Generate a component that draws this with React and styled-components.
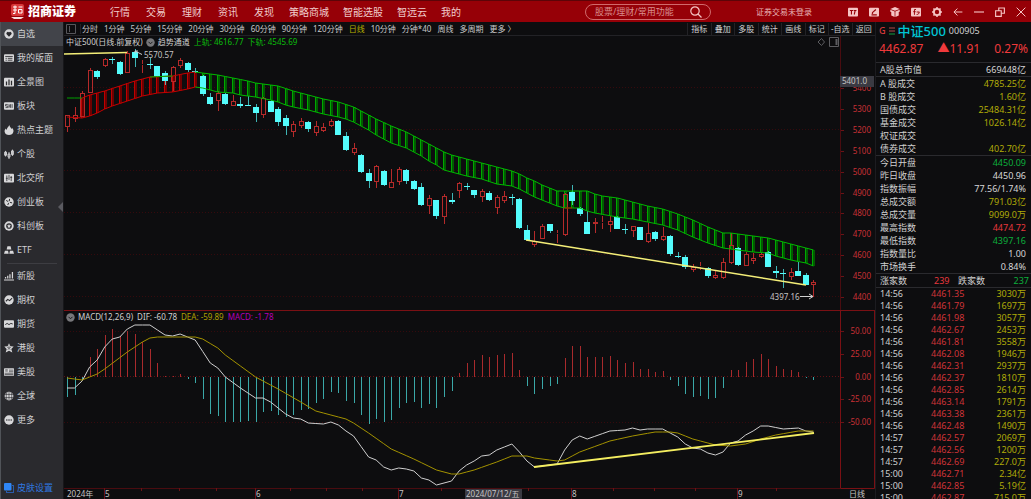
import React, { useState } from "react";
import styled, { createGlobalStyle, css } from "styled-components";

const STEP = 7.54;
const X0 = 67;
const xAt = (i) => X0 + i * STEP;

const UP = "#b52a2a";
const DOWN = "#54fcfc";

// r = rising, c = falling; high, body top, body bottom, low
const candles = `r115,115,127,132 r107,115,119,122 r91,93,117,117 r68,70,93,93 c70,71,77,79
r58,59,66,67 c57,59,60,64 c61,62,74,75 r51,53,73,73 c49,52,58,67
r60,64,65,73 c58,64,65,69 c66,66,77,77 c71,73,81,85 r66,67,82,91
r58,60,66,68 c62,63,70,72 c68,71,72,73 c75,76,94,96 c93,97,104,105
r91,93,101,111 c93,94,104,105 r95,101,106,106 c97,104,106,108 c96,105,106,106
c104,107,113,122 r97,98,115,118 c100,101,112,112 c107,109,122,126 c115,118,126,135
r121,124,132,137 r118,121,126,128 c121,122,129,132 r121,126,133,136 r123,127,131,132
r119,121,126,127 c120,121,135,135 c132,136,150,151 r143,148,153,155 c154,155,172,173
c169,173,181,188 r165,166,182,188 c170,171,185,186 r169,182,188,188 r167,169,182,185
c169,170,181,184 c180,181,189,190 c183,187,205,206 r195,198,206,214 c200,200,216,219
r194,196,217,224 c193,200,202,204 r182,183,191,198 c183,186,187,190 c190,190,195,198
r189,191,197,202 c191,193,200,201 r195,197,208,214 r191,196,201,203 c194,197,198,205
c198,199,228,229 c225,230,240,241 r231,241,245,247 r224,226,239,239 c224,224,231,233
r230,233,234,243 r193,194,235,236 c185,192,201,205 c207,208,214,216 c211,222,234,234
r218,222,224,233 r216,222,223,229 r216,221,225,232 c216,217,229,229 c224,229,230,234
r226,226,231,237 c227,227,240,240 r223,233,242,243 c231,232,239,241 r227,236,240,241
c235,236,254,256 c252,256,257,258 c255,257,267,269 r264,267,270,272 r262,266,267,270
c267,268,276,278 r271,275,278,279 r258,262,278,279 r233,245,263,264 c247,248,265,266
r252,254,266,266 r253,258,261,264 r252,254,257,258 c251,252,267,267 c266,271,273,278
c269,273,274,288 r268,272,277,280 c262,271,276,276 c273,275,285,285 r280,282,285,297`
  .split(/\s+/)
  .map((s) => [s[0], ...s.slice(1).split(",").map(Number)]);

const macdBars = [
  -20, -18, -3, 20, 28, 42, 48, 41, 46, 43, 35, 28, 14, 1, 1, 3, -2, -6, -22,
  -37, -39, -45, -45, -45, -44, -45, -35, -34, -38, -40, -38, -33, -32, -26,
  -22, -15, -16, -24, -26, -38, -47, -42, -45, -43, -31, -26, -25, -31, -27,
  -31, -20, -14, 4, 14, 17, 22, 20, 22, 23, 24, 7, -9, -17, -12, -9, -7, 19,
  31, 31, 20, 20, 20, 21, 17, 14, 15, 8, 8, 5, 6, -3, -9, -17, -20, -19, -22,
  -21, -11, 7, 7, 15, 18, 23, 18, 11, 8, 7, 5, -1, -3,
];

const parse = (s) => s.split(" ").map((p) => p.split(":").map(Number));

const upperKeys = parse(
  "0:98 2:98 3:95 5:91 7:86 9:81 11:77 14:76 16:73 17:72 18:73 20:75 22:78 24:81 25:83 27:85 28:86 30:91 32:95 34:99 36:102 38:107 39:111 40:115 41:119 43:126 45:132 46:136 47:140 48:144 49:148 50:152 51:155 53:159 55:163 57:167 59:171 60:174 61:178 62:181 63:185 64:188 65:191 69:191 70:194 71:196 73:198 76:204 77:206 79:209 81:214 83:220 85:227 87:233 88:233 91:236 93:238 95:242 97:246 98:248 99:250"
);
const lowerKeys = parse(
  "0:117 2:118 3:116 4:113 5:109 6:106 8:101 10:96 12:93 14:92 16:89 17:87 18:88 20:92 22:93 23:95 25:97 27:100 28:102 29:105 30:107 32:110 34:114 36:117 37:119 38:122 39:126 40:130 41:135 43:143 45:148 47:156 48:161 49:165 50:170 51:172 53:176 55:179 57:184 59:186 60:189 61:193 62:197 63:200 64:203 65:206 66:208 68:208 69:211 70:213 73:217 75:219 77:222 79:225 81:230 83:237 85:243 87:248 89:250 91:252 93:253 94:256 96:260 98:263 99:266"
);
const difKeys = parse(
  "0:387 1:387 2:380 3:366 4:359 5:346 6:338 7:336 8:328 9:324 11:324 13:334 14:335 15:333 16:336 17:339 19:362 20:367 21:376 23:387 25:397 26:397 27:401 29:413 30:417 31:418 32:422 34:423 35:421 36:424 37:430 38:435 40:456 41:459 42:466 43:469 44:467 45:468 46:470 47:477 48:479 49:484 50:482 51:480 52:470 53:464 54:460 55:455 56:454 57:449 58:446 59:443 60:451 61:460 62:466 65:463 66:449 67:439 68:435 69:438 72:430 74:429 75:427 76:429 77:428 79:428 80:432 81:436 82:443 83:447 84:448 85:452 86:454 87:451 88:442 89:440 90:434 91:430 92:425 93:425 95:428 97:427 98:430 99:431"
);
const deaKeys = parse(
  "0:377 2:379 3:376 4:373 5:368 8:351 10:341 11:337 12:336 17:336 18:338 20:347 21:354 25:376 28:388 31:401 33:410 34:412 37:418 38:422 40:432 43:448 46:458 49:469 51:473 52:473 54:469 57:461 59:455 61:455 62:457 65:460 66:459 68:451 72:440 75:435 78:431 80:431 81:432 83:438 86:444 88:445 90:443 92:438 94:434 97:430 99:430"
);

const valueAt = (keys, i) => {
  const n = keys.findIndex(([k]) => k >= i);
  if (n <= 0) return keys[0][1];
  const [a, ya] = keys[n - 1];
  const [b, yb] = keys[n];
  return ya + ((yb - ya) * (i - a)) / (b - a);
};

const points = (keys, from = 0, to = 99) => {
  const list = [];
  for (let i = from; i <= to; i++) list.push(`${xAt(i)},${valueAt(keys, i)}`);
  return list.join(" ");
};

const menu = ["行情", "交易", "理财", "资讯", "发现"];
const menuMore = ["策略商城", "智能选股", "智远云", "我的"];
const periods = [
  "分时", "1分钟", "5分钟", "15分钟", "20分钟", "30分钟", "60分钟", "90分钟",
  "120分钟", "日线", "10分钟", "分钟*40", "周线", "多周期", "更多 〉",
];
const tools = ["指标", "叠加", "多股", "统计", "画线", "标记", "-自选", "返回"];

const sideTop = [
  ["自选", "heart"],
  ["我的版面", "panel"],
  ["全景图", "bars"],
  ["板块", "block"],
  ["热点主题", "fire"],
  ["个股", "candle"],
  ["北交所", "north"],
  ["创业板", "wheel"],
  ["科创板", "star"],
  ["ETF", "etf"],
];
const sideBottom = [
  ["新股", "rise"],
  ["期权", "option"],
  ["期货", "future"],
  ["港股", "flower"],
  ["美股", "flag"],
  ["全球", "globe"],
  ["更多", "more"],
];

const turnover = [
  ["A 股成交", "4785.25亿", "y"],
  ["B 股成交", "1.60亿", "y"],
  ["国债成交", "25484.31亿", "y"],
  ["基金成交", "1026.14亿", "y"],
  ["权证成交", "", "y"],
  ["债券成交", "402.70亿", "y"],
];
const quotes = [
  ["今日开盘", "4450.09", "g"],
  ["昨日收盘", "4450.96", "w"],
  ["指数振幅", "77.56/1.74%", "w"],
  ["总成交额", "791.03亿", "y"],
  ["总成交量", "9099.0万", "y"],
  ["最高指数", "4474.72", "r"],
  ["最低指数", "4397.16", "g"],
  ["指数量比", "1.00", "w"],
  ["市场换手", "0.84%", "w"],
];
const ticks = [
  ["14:56", "4461.35", "3030万"],
  ["14:56", "4461.79", "1697万"],
  ["14:56", "4461.98", "3057万"],
  ["14:56", "4462.67", "2453万"],
  ["14:56", "4461.81", "3558万"],
  ["14:56", "4462.08", "1946万"],
  ["14:56", "4462.31", "2937万"],
  ["14:56", "4462.37", "1810万"],
  ["14:56", "4462.85", "2614万"],
  ["14:56", "4463.14", "1791万"],
  ["14:56", "4463.38", "2361万"],
  ["14:56", "4462.48", "1490万"],
  ["14:57", "4462.57", "2069万"],
  ["14:57", "4462.56", "1200万"],
  ["14:57", "4462.69", "227.0万"],
  ["15:00", "4462.71", "2.34亿"],
  ["15:00", "4462.85", "5.19亿"],
  ["15:00", "4462.87", "715.0万"],
];

const tones = { r: "#e8383d", g: "#0caf3c", y: "#b0ab08", w: "#d6d6d6" };

const dark = "#2a2a2e";
const sideIcons = {
  heart: (
    <>
      <circle cx="8" cy="8" r="7.5" />
      <path d="M8 12.2 4.2 8.2a2.3 2.3 0 0 1 3.8-2.6 2.3 2.3 0 0 1 3.8 2.6z" fill={dark} />
    </>
  ),
  panel: (
    <>
      <rect x="0" y="2" width="16" height="12" rx="1.5" />
      <path d="M2 5.5h12M2.5 8.5h2M6 8.5h7.5M2.5 11.5h2M6 11.5h7.5" stroke={dark} strokeWidth="1.4" />
    </>
  ),
  bars: (
    <>
      <rect x="0" y="1" width="16" height="14" rx="1.5" />
      <path d="M4 13V7M8 13V4M12 13V6" stroke={dark} strokeWidth="2" />
    </>
  ),
  block: (
    <>
      <rect x="0" y="2" width="16" height="12" rx="1.5" />
      <path d="M6 5.5H2.5V8H6v2.5H2.5M8 5v6M8 8h2M10.5 5v6M13 5v6" stroke={dark} strokeWidth="1.2" fill="none" />
    </>
  ),
  fire: (
    <path d="M8.5 0c.5 3 3 4 3.2 6.2.8-.5 1-1.2 1-2 2 2 3 4 2.3 6.5C14.3 14 11.5 16 8 16s-6.500-2-7-5.300C.7 8.500 1.500 7 3 5.500c.2 1.200.6 1.800 1.300 2.200C4.500 4.500 7.500 3 8.500 0z" />
  ),
  candle: (
    <path d="M1 5h3v5H1zM2.500 3v9M6.500 8h3v5h-3zM8 5v11M12 3h3v6h-3zM13.500 1v10" fill="none" stroke="#d8d8da" strokeWidth="1.500" />
  ),
  north: (
    <>
      <rect x="0" y="1" width="16" height="14" rx="1.500" />
      <path d="M4.500 4v9M3 8.500h3M8 3v8M11.500 5v8M10 7h3" stroke={dark} strokeWidth="1.300" />
    </>
  ),
  wheel: (
    <>
      <circle cx="8" cy="8" r="7.500" />
      <path d="M8 8 3.500 5.500M8 8l1-5M8 8l5 1.500M8 8l-2 4.800" stroke={dark} strokeWidth="1.600" />
      <circle cx="8" cy="8" r="1.800" />
    </>
  ),
  star: (
    <>
      <circle cx="8" cy="8" r="7.500" />
      <circle cx="8" cy="8" r="4.500" fill={dark} />
      <path d="m8 4.800 1 2.100 2.300.3-1.700 1.600.4 2.300-2-1.100-2 1.100.4-2.300-1.700-1.600L7 6.900z" />
    </>
  ),
  etf: <path d="M5.500 2h5l1.300 5H4.200zM1.500 9h5l1 5H0zM9.500 9h5L16 14H8.500z" />,
  rise: <path d="M0 13.500h16V15H0zM1.500 9.500h2V12h-2zM5 7.500h2V12H5zM8.500 5h2v7h-2zM12.500 1.500h2V12h-2z" />,
  option: (
    <>
      <circle cx="8" cy="8" r="7.500" />
      <path d="m3 10 3-3 3 2 4-4" stroke={dark} strokeWidth="1.700" fill="none" />
    </>
  ),
  future: (
    <>
      <rect x="0" y="2" width="16" height="12" rx="1.500" />
      <path d="m2 9 3-2 3 2 3-2 3 1" stroke={dark} strokeWidth="1.500" fill="none" />
    </>
  ),
  flower: (
    <>
      <path d="m8 .5 2.200 4.700 5.300.5-3.800 3.800 1.600 5.500L8 12.300 2.700 15l1.600-5.500L.5 5.700l5.300-.5z" />
      <path d="M8 8V4M8 8l3-1M8 8l2 3M8 8l-2 3M8 8 5 7" stroke={dark} strokeWidth=".8" />
    </>
  ),
  flag: (
    <>
      <rect x="0" y="2" width="16" height="12" rx="1" />
      <path d="M2 4.500h4M2 6.500h4M8 5h7M8 7.500h7M1 10h14M1 12h14" stroke={dark} strokeWidth="1" />
    </>
  ),
  globe: (
    <>
      <circle cx="8" cy="8" r="7" />
      <path d="M8 1v14M1 5.500h14M1 10.500h14M5 1.800c-2 4-2 8.400 0 12.400M11 1.800c2 4 2 8.400 0 12.400" stroke={dark} strokeWidth="1" fill="none" />
    </>
  ),
  more: (
    <>
      <circle cx="8" cy="8" r="7.500" />
      <circle cx="4.500" cy="8" r="1.200" fill={dark} />
      <circle cx="8" cy="8" r="1.200" fill={dark} />
      <circle cx="11.500" cy="8" r="1.200" fill={dark} />
    </>
  ),
};

const cut = "#960007";
const headIcons = [
  ["模拟", <>
    <rect x="0" y="1" width="16" height="14" rx="1.500" />
    <path d="M3 5.500h5M5.500 5.500V12M9 5.500h4.500M11.500 5.500 10 12" stroke={cut} strokeWidth="1.800" />
  </>],
  ["编辑", <>
    <rect x="0" y="1" width="16" height="14" rx="1.500" />
    <path d="m5 9.500 6-5.500M4 12.500h8.500M4.500 10.500l2-.5" stroke={cut} strokeWidth="1.800" />
  </>],
  ["组件", <>
    <path d="M8 0l7.500 3L8 6 .5 3zM.5 4.500 7.400 7.300V16L2 13.500V8L.5 7.500zM15.500 4.500 8.600 7.300V16l5.400-2.500V8l1.500-.5z" />
  </>],
  ["公式", <>
    <rect x="0" y="1" width="16" height="14" rx="1.500" />
    <path d="M8 4H5.500v8.500M3.500 7.500h4M9 8h4.500M9 12c3 0 4-1.500 4-4" stroke={cut} strokeWidth="1.500" fill="none" />
  </>],
  ["设置", <>
    <circle cx="8" cy="8" r="5" fill="none" stroke="#f5c4c4" strokeWidth="3" />
    <path d="M8 0v3M8 13v3M0 8h3M13 8h3M2.300 2.300l2 2M11.700 11.700l2 2M13.700 2.300l-2 2M4.300 11.700l-2 2" stroke="#f5c4c4" strokeWidth="2.400" />
  </>],
  ["后退", <path d="M15 8H1.500M7 2.500 1.500 8 7 13.500" fill="none" stroke="#f5c4c4" strokeWidth="1.600" />],
  ["最小化", <path d="M0 8h16" stroke="#f5c4c4" strokeWidth="1.800" />],
  ["还原", <path d="M1 6h9v9H1zM6 6V1.500h9V10h-5" fill="none" stroke="#f5c4c4" strokeWidth="1.800" />],
  ["关闭", <path d="m1 1 14 14M15 1 1 15" stroke="#f5c4c4" strokeWidth="1.600" />],
];

const App = () => {
  const [section, setSection] = useState("自选");
  const [period, setPeriod] = useState("日线");

  return (
    <>
      <GlobalStyle />
      <Page>
        <Header>
          <Brand>
            <svg width="15" height="16" viewBox="0 0 15 16">
              <rect x="1" y="0" width="13" height="12" rx="2" fill="#d8383a" />
              <path d="M3 3h4M5 1.500v8M3 6h4M8.500 3h4M8.500 5.500h3.500v3.500H8.500zM3 9.500h2" stroke="#fff" strokeWidth="1" fill="none" />
              <path d="M1 13h13l-3 2H4z" fill="#f6dcdc" />
            </svg>
            <strong>招商证券</strong>
          </Brand>
          <Nav>
            {menu.map((m) => (
              <NavLink href="#" key={m}>{m}</NavLink>
            ))}
            {menuMore.map((m) => (
              <NavLink href="#" key={m} $tight>{m}</NavLink>
            ))}
          </Nav>
          <Search>
            <input aria-label="搜索" placeholder="股票/理财/常用功能" />
            <svg width="12" height="12" viewBox="0 0 12 12" fill="none" stroke="#f5c4c4" strokeWidth="1.200">
              <circle cx="5" cy="5" r="4.200" />
              <path d="m8 8 3.500 3.500" />
            </svg>
          </Search>
          <Login href="#">证券交易未登录</Login>
          <HeadButtons>
            {headIcons.map(([label, icon]) => (
              <HeadButton key={label} aria-label={label}>
                <svg width="10" height="10" viewBox="0 0 16 16" fill="#f5c4c4">{icon}</svg>
              </HeadButton>
            ))}
          </HeadButtons>
        </Header>

        <Body>
          <Sidebar>
            {sideTop.map(([name, icon]) => (
              <SideItem key={name} name={name} icon={icon} active={section === name} onPick={setSection} />
            ))}
            <SideRule />
            {sideBottom.map(([name, icon]) => (
              <SideItem key={name} name={name} icon={icon} active={section === name} onPick={setSection} />
            ))}
            <Skin>
              <svg width="10" height="10" viewBox="0 0 16 16">
                <path d="M13 4h2.500v11.500H4V13" fill="none" stroke="#2c6bd0" strokeWidth="1.500" />
                <rect width="12" height="12" rx="1.500" fill="#2f86f6" />
              </svg>
              皮肤设置
            </Skin>
            <Collapse aria-label="收起" />
          </Sidebar>

          <Center>
            <Toolbar>
              <Layout aria-label="布局">
                <svg width="10" height="10" viewBox="0 0 10 10" fill="none" stroke="#56565a">
                  <path d="M.5.5h9v9h-9zM3.500 2v6" />
                </svg>
              </Layout>
              <Periods>
                {periods.map((p) => (
                  <Period key={p} $active={p === period} onClick={() => setPeriod(p)}>{p}</Period>
                ))}
              </Periods>
              <Tools>
                {tools.map((t) => (
                  <Tool key={t}>{t}</Tool>
                ))}
              </Tools>
            </Toolbar>

            <Pane>
              <div>
                <Legend>
                  <span>中证500(日线.前复权)</span>
                  <Chevron />
                  <span>趋势通道</span>
                  <Value $color="#0bbd0b">上轨: 4616.77</Value>
                  <Value $color="#0bbd0b">下轨: 4545.69</Value>
                  <LegendIcons width="22" height="10" viewBox="0 0 22 10" fill="none" stroke="#5c5c60">
                    <path d="m4.500 1.500 3 3.500-3 3.500L1 5zM12.500.5h9v9h-9z" />
                    <path d="M19.500 2v6" strokeWidth="2" />
                  </LegendIcons>
                </Legend>
                <PriceChart />
              </div>
              <PriceAxis />
            </Pane>
            <Pane $lower>
              <div>
                <Legend>
                  <Chevron />
                  <span>MACD(12,26,9)</span>
                  <Value>DIF: -60.78</Value>
                  <Value $color="#b0a000">DEA: -59.89</Value>
                  <Value $color="#b400b4">MACD: -1.78</Value>
                </Legend>
                <MacdChart />
              </div>
              <MacdAxis />
            </Pane>
          </Center>

          <Side>
            <Title>
              <Mark>G</Mark>
              <svg width="6" height="8" viewBox="0 0 6 8">
                <path d="M0 1h6M0 4h6" stroke="#b5484a" />
                <path d="M0 7h6" stroke="#12a040" />
              </svg>
              <h1>中证500</h1>
              <span>000905</span>
            </Title>
            <Price>
              <span>4462.87</span>
              <span>▲11.91</span>
              <span>0.27%</span>
            </Price>
            <Rows>
              <Row>
                <dt>A股总市值</dt>
                <Figure>669448亿</Figure>
              </Row>
            </Rows>
            <Rows>
              {turnover.map((r) => (
                <Row key={r[0]}>
                  <dt>{r[0]}</dt>
                  <Figure $tone={r[2]}>{r[1]}</Figure>
                </Row>
              ))}
            </Rows>
            <Rows>
              {quotes.map((r) => (
                <Row key={r[0]}>
                  <dt>{r[0]}</dt>
                  <Figure $tone={r[2]}>{r[1]}</Figure>
                </Row>
              ))}
            </Rows>
            <Rows>
              <Counts>
                <dt>涨家数</dt>
                <Figure $tone="r">239</Figure>
                <dt>跌家数</dt>
                <Figure $tone="g">237</Figure>
              </Counts>
            </Rows>
            <Ticks>
              <tbody>
                {ticks.map((t, i) => (
                  <tr key={i}>
                    <td>{t[0]}</td>
                    <td>{t[1]}</td>
                    <td>{t[2]}</td>
                  </tr>
                ))}
              </tbody>
            </Ticks>
          </Side>
        </Body>
      </Page>
    </>
  );
};

const SideItem = ({ name, icon, active, onPick }) => (
  <SideButton $active={active} onClick={() => onPick(name)}>
    <svg width="10" height="10" viewBox="0 0 16 16" fill="#d8d8da">{sideIcons[icon]}</svg>
    {name}
  </SideButton>
);

const Chevron = () => (
  <svg width="9" height="9" viewBox="0 0 9 9">
    <circle cx="4.500" cy="4.500" r="4.200" fill="#77777a" />
    <path d="m2.500 3.800 2 2 2-2" fill="none" stroke="#1a1a1c" />
  </svg>
);

const PriceChart = () => (
  <Svg viewBox="64 48 776 261">
    {[87, 129, 170, 212, 254, 296].map((y) => (
      <path key={y} d={`M64 ${y}.5H840`} stroke="#350a0d" strokeDasharray="1 2" />
    ))}

    {candles.map((_, i) => {
      if (i < 2) return null;
      const top = valueAt(upperKeys, i);
      const height = valueAt(lowerKeys, i) - top;
      const x = Math.round(xAt(i));
      return (
        <g key={i}>
          <rect x={x - 1} y={top} width="3" height={height} fill={i < 18 ? "#6d0000" : "#005c00"} />
          <rect x={x - 1} y={top} width="1" height={height} fill={i < 18 ? "#c00000" : "#00a800"} />
        </g>
      );
    })}

    {candles.map(([kind, high, top, bottom, low], i) => {
      const x = Math.round(xAt(i));
      if (kind === "c") {
        return (
          <g key={i} fill={DOWN}>
            <rect x={x} y={high} width="1" height={low - high} opacity="0.7" />
            <rect x={x - 3} y={top} width="6" height={bottom - top} />
          </g>
        );
      }
      return (
        <g key={i} fill="none" stroke={UP}>
          <path d={`M${x}.5 ${high}V${top}M${x}.5 ${bottom}V${low}`} />
          <rect x={x - 1.5} y={top + 0.5} width="4" height={Math.max(bottom - top - 1, 0)} />
        </g>
      );
    })}

    <g fill="none" strokeWidth="1">
      <polyline points={points(upperKeys, 0, 2)} stroke="#00a000" />
      <polyline points={points(lowerKeys, 0, 17)} stroke="#c80000" />
      <polyline points={points(upperKeys, 2, 17)} stroke="#c80000" />
      <polyline points={points(upperKeys, 11, 14)} stroke="#00b400" />
      <polyline points={points(upperKeys, 17)} stroke="#00b800" />
      <polyline points={points(lowerKeys, 17)} stroke="#00b800" />
      <polyline points={points(lowerKeys, 66, 67)} stroke="#c80000" />
    </g>

    <path d="M64 54 127 52.500M526 240 806 285" stroke="#f4ee78" strokeWidth="1.500" />
    <g stroke="#d0d0d0" fill="none">
      <path d="M142 54.500 135 51M135 53.500V51h3" />
      <path d="M800 296.500h13M809 294l4 2.500-4 2.500" />
    </g>
    <ChartText x="144" y="58">5570.57</ChartText>
    <ChartText x="770" y="300">4397.16</ChartText>
  </Svg>
);

const PriceAxis = () => (
  <Svg viewBox="840 35 35 274">
    <path d="M840.500 35V309" stroke="#4a0c10" />
    {[5400, 5300, 5200, 5100, 5000, 4900, 4800, 4700, 4600, 4500, 4400].map((p, i) => {
      const y = Math.round(87 + i * 20.9);
      return (
        <g key={p}>
          <path d={`M841 ${y}.5h3`} stroke="#6b1216" />
          <ChartText x="871" y={y + 3} textAnchor="end" $color="#c83035">{p}</ChartText>
        </g>
      );
    })}
    <rect x="840" y="75" width="34" height="11" fill="#3a3a42" />
    <ChartText x="867" y="83" textAnchor="end">5401.0</ChartText>
  </Svg>
);

const months = [[104, "5"], [255, "6"], [398, "7"], [571, "8"], [737, "9"]];
const minorTicks = [141, 179, 216, 290, 326, 362, 441, 528, 613, 654, 695, 776];

const MacdChart = () => (
  <Svg viewBox="64 322 776 177">
    {[330, 375, 421].map((y) => (
      <path key={y} d={`M64 ${y}.5H840`} stroke={y === 375 ? "#5c1014" : "#350a0d"} strokeDasharray="1 2" />
    ))}
    {macdBars.map((v, i) => (
      <rect
        key={i}
        x={Math.round(xAt(i))}
        y={v > 0 ? 376 - v : 376}
        width="1"
        height={Math.abs(v)}
        fill={v > 0 ? "#a82a2c" : "#3aa8a8"}
      />
    ))}
    <polyline points={points(difKeys)} fill="none" stroke="#cfcfcf" />
    <polyline points={points(deaKeys)} fill="none" stroke="#a39200" />
    <path d="M534 466 814 432" stroke="#f4ee60" strokeWidth="1.800" />

    <path d="M64 487.500H840" stroke="#4a0c10" />
    {minorTicks.map((x) => (
      <path key={x} d={`M${x}.5 487v3`} stroke="#6b1216" />
    ))}
    <ChartText x="67" y="496">2024年</ChartText>
    {months.map(([x, m]) => (
      <g key={m}>
        <path d={`M${x}.5 487V499`} stroke="#6b1216" />
        <ChartText x={x + 1} y="496">{m}</ChartText>
      </g>
    ))}
    <rect x="465" y="488" width="57" height="10" fill="#3a3a42" />
    <ChartText x="466" y="496">2024/07/12/五</ChartText>
  </Svg>
);

const MacdAxis = () => (
  <Svg viewBox="840 310 35 189">
    <path d="M840.500 310V487.500H874.500V310" fill="none" stroke="#7a1014" />
    {["50.00", "25.00", "0.00", "-25.00", "-50.00"].map((t, i) => {
      const y = Math.round(330 + i * 22.8);
      return (
        <g key={t}>
          <path d={`M841 ${y}.5h3`} stroke="#6b1216" />
          <ChartText x="871" y={y + 3} textAnchor="end" $color="#c83035">{t}</ChartText>
        </g>
      );
    })}
    <ChartText x="849" y="496">日线</ChartText>
  </Svg>
);

const GlobalStyle = createGlobalStyle`
  * {
    box-sizing: border-box;
  }

  body {
    margin: 0;
    background: #0d0d0f;
    color: #d0d0d0;
    font-family: "Noto Sans", "Noto Sans CJK SC", sans-serif;
    font-size: 8px;
  }

  button, input {
    font: inherit;
    color: inherit;
    background: none;
    border: 0;
    padding: 0;
    margin: 0;
  }

  button {
    cursor: pointer;
    white-space: nowrap;
  }

  a {
    color: inherit;
    text-decoration: none;
  }

  svg {
    flex-shrink: 0;
  }
`;

const Page = styled.div`
  display: flex;
  flex-direction: column;
  height: 100vh;
  overflow: hidden;
`;

const Header = styled.header`
  display: flex;
  align-items: center;
  flex-shrink: 0;
  height: 22px;
  padding-left: 10px;
  border-top: 1px solid #5c0408;
  background: #960007;
  color: #f0cccc;
`;

const Brand = styled.div`
  display: flex;
  align-items: center;
  gap: 3px;
  width: 92px;

  strong {
    font-size: 12px;
    font-weight: 900;
    line-height: 16px;
    color: #ffffff;
  }
`;

const Nav = styled.nav`
  display: flex;
  flex: 1;
`;

const NavLink = styled.a`
  padding: 0 ${(p) => (p.$tight ? 7 : 8)}px;
  font-size: 10px;
  line-height: 16px;
  white-space: nowrap;
`;

const Search = styled.label`
  display: flex;
  align-items: center;
  width: 126px;
  height: 16px;
  padding: 0 8px 0 9px;
  border: 1px solid #d06a6c;
  border-radius: 8px;

  input {
    flex: 1;
    min-width: 0;
    font-size: 9px;
    outline: none;
  }

  input::placeholder {
    color: #d98d8e;
    opacity: 1;
  }
`;

const Login = styled.a`
  margin-left: 45px;
  color: #e8b4b4;
  white-space: nowrap;
`;

const HeadButtons = styled.div`
  display: flex;
  margin-left: 30px;
`;

const HeadButton = styled.button`
  display: flex;
  align-items: center;
  justify-content: center;
  width: 21px;
  height: 20px;
`;

const Body = styled.div`
  display: grid;
  grid-template-columns: 64px minmax(0, 1fr) 156px;
  flex: 1;
  min-height: 0;
`;

const Sidebar = styled.aside`
  position: relative;
  display: flex;
  flex-direction: column;
  border-left: 1px solid #505358;
  border-right: 1px solid #17171a;
  background: #2a2a2e;
`;

const sideRow = css`
  display: flex;
  align-items: center;
  gap: 3px;
  height: 24px;
  padding-left: 3px;
  font-size: 9px;
  line-height: 12px;
`;

const SideButton = styled.button`
  ${sideRow}
  color: #d0d0d2;
  background: ${(p) => (p.$active ? "#42444a" : "transparent")};
`;

const SideRule = styled.div`
  height: 1px;
  margin: 1px 6px 0;
  background: #3d3d42;
`;

const Skin = styled.button`
  ${sideRow}
  margin-top: auto;
  color: #2f78e0;
`;

const Collapse = styled.button`
  position: absolute;
  right: 0;
  top: 180px;
  border: 5px solid transparent;
  border-left-width: 0;
  border-right-color: #5a5a60;
`;

const Center = styled.main`
  min-width: 0;
`;

const Toolbar = styled.div`
  display: flex;
  align-items: center;
  height: 14px;
  border-bottom: 1px solid #222226;
`;

const Layout = styled.button`
  display: flex;
  padding: 0 4px 0 2px;
  border-right: 1px solid #222226;
`;

const Periods = styled.div`
  display: flex;
  flex: 1;
  gap: 6px;
  padding-left: 1px;
`;

const Period = styled.button`
  line-height: 12px;
  color: ${(p) => (p.$active ? "#b5b000" : "#c8c8c8")};
`;

const Tools = styled.div`
  display: flex;
  width: 188px;
`;

const Tool = styled.button`
  flex: 1;
  border-left: 1px solid #222226;
  line-height: 12px;
`;

const Pane = styled.section`
  display: grid;
  grid-template-columns: minmax(0, 776fr) minmax(0, 35fr);
  border-top: ${(p) => (p.$lower ? "1px solid #7a1014" : "0")};
`;

const Legend = styled.div`
  display: flex;
  align-items: center;
  gap: 3px;
  height: 12px;
  padding: 0 1px 0 2px;
  line-height: 12px;
  white-space: nowrap;
`;

const LegendIcons = styled.svg`
  margin-left: auto;
`;

const Value = styled.span`
  margin-left: 1px;
  color: ${(p) => p.$color || "inherit"};
`;

const Svg = styled.svg`
  display: block;
  width: 100%;
`;

const ChartText = styled.text`
  fill: ${(p) => p.$color || "#c4c4c4"};
  font-size: 8px;
`;

const Side = styled.aside`
  min-width: 0;
  overflow: hidden;
  border-left: 1px solid #1c1c20;
`;

const Title = styled.div`
  display: flex;
  align-items: center;
  gap: 3px;
  height: 17px;
  padding-left: 3px;

  h1 {
    margin: 0;
    font-size: 13px;
    font-weight: 500;
    line-height: 16px;
    color: #00c4d4;
  }

  span {
    font-size: 9px;
  }
`;

const Mark = styled.b`
  font-size: 9px;
  font-weight: 500;
  color: #d83a3c;
`;

const Price = styled.div`
  display: flex;
  align-items: center;
  justify-content: space-between;
  height: 23px;
  padding: 0 3px 4px;
  font-size: 12px;
  line-height: 16px;
  color: #f03a3c;
`;

const Rows = styled.dl`
  margin: 0;
  padding-left: 4px;
  border-top: 1px solid #2a2a2e;
`;

const Row = styled.div`
  display: flex;
  align-items: center;
  justify-content: space-between;
  height: 13px;
  padding-right: 5px;
  font-size: 9px;
  line-height: 13px;

  dt {
    white-space: pre;
  }
`;

const Counts = styled(Row)`
  display: grid;
  grid-template-columns: 54px 24px 1fr auto;
  padding-right: 2px;
`;

const Figure = styled.dd`
  margin: 0;
  color: ${(p) => tones[p.$tone || "w"]};
`;

const Ticks = styled.table`
  width: 100%;
  border-top: 1px solid #2a2a2e;
  border-collapse: collapse;
  table-layout: fixed;
  font-size: 9px;
  line-height: 12px;

  td {
    height: 12px;
    padding: 0;
    text-align: right;
  }

  td:first-child {
    width: 26%;
    padding-left: 4px;
    text-align: left;
  }

  td:nth-child(2) {
    width: 31%;
    color: #d03438;
  }

  td:last-child {
    padding-right: 5px;
    color: #b0ab08;
  }
`;

export default App;
